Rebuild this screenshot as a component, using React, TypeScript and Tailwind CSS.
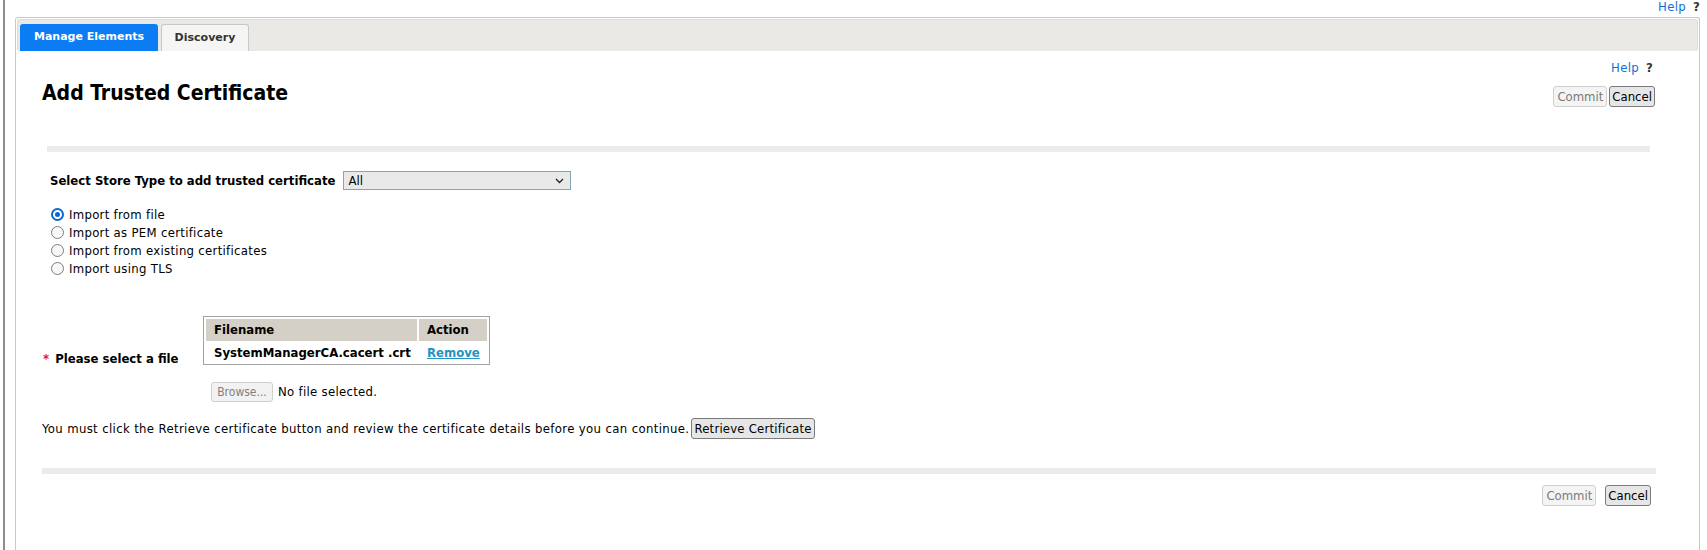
import React from 'react';

const bodyFont = "font-['DejaVu_Sans_Condensed','DejaVu_Sans',sans-serif]";

interface RadioOption {
  label: string;
  checked?: boolean;
}

const radioOptions: RadioOption[] = [
  { label: 'Import from file', checked: true },
  { label: 'Import as PEM certificate' },
  { label: 'Import from existing certificates' },
  { label: 'Import using TLS' }
];

const Radio: React.FC<RadioOption> = ({ label, checked }) => (
  <div className="flex h-[18px] items-center">
    {checked ? (
      <span className="flex h-[13px] w-[13px] items-center justify-center rounded-full border-2 border-[#0b67d0] bg-white">
        <span className="h-[5px] w-[5px] rounded-full bg-[#0b67d0]" />
      </span>
    ) : (
      <span className="h-[13px] w-[13px] rounded-full border-[1.5px] border-[#7d7d7d] bg-[#f7f7f7]" />
    )}
    <span className="ml-[5px] text-[13px] tracking-[0.3px] text-black">{label}</span>
  </div>
);

const CommitCancel: React.FC<{ gap: string }> = ({ gap }) => (
  <div className={`flex ${gap}`}>
    <button className="h-[21px] rounded-[3px] border border-[#cfcfcf] bg-[#f4f4f4] px-[3px] text-[13px] leading-[19px] text-[#7a7a7a]">
      Commit
    </button>
    <button className="h-[21px] rounded-[3px] border border-[#7a7a7a] bg-[#e6e6e6] px-[2px] text-[13px] leading-[19px] text-black">
      Cancel
    </button>
  </div>
);

const App: React.FC = () => {
  return (
    <div className={`h-[550px] w-full overflow-hidden bg-white pl-[3px] ${bodyFont}`}>
      <div className="flex h-full flex-col border-l-2 border-[#8d8d8d] pl-[10px] pr-[7px]">
        {/* top help */}
        <div className="flex h-[17px] items-start justify-end gap-[7px] text-[13px] leading-[13px] tracking-[0.3px]">
          <a className="text-[#0f6fd6]">Help</a>
          <span className="font-bold text-[#333]">?</span>
        </div>

        <div className="flex-1 rounded-t-[3px] border border-b-0 border-[#c9c9c9] p-px">
          {/* tabs */}
          <div className="flex h-[32px] items-end gap-[3px] rounded-[3px] border border-b-0 border-[#dedcd8] bg-[#ebe9e6] pl-[2px] font-['DejaVu_Sans',sans-serif] text-[11px] font-bold">
            <div className="flex h-[27px] w-[138px] items-center justify-center rounded-t-[3px] bg-[#0c7cf5] text-white">
              Manage Elements
            </div>
            <div className="flex h-[27px] w-[88px] items-center justify-center rounded-t-[3px] border border-b-0 border-[#c8c8c8] bg-[#f5f5f3] text-[#333]">
              Discovery
            </div>
          </div>

          {/* help */}
          <div className="mt-[9px] flex h-[16px] items-center justify-end gap-[7px] pr-[45px] text-[13px] tracking-[0.3px]">
            <a className="text-[#0f6fd6]">Help</a>
            <span className="font-bold text-[#333]">?</span>
          </div>

          {/* title row */}
          <div className="flex h-[70px] items-start justify-between pl-[25px] pr-[43px]">
            <h1 className="mt-[4px] text-[21px] font-bold leading-[26px] text-black">Add Trusted Certificate</h1>
            <div className="mt-[10px]">
              <CommitCancel gap="gap-[2px]" />
            </div>
          </div>

          <div className="ml-[30px] mr-[48px] h-[6px] bg-[#ebebeb]" />

          {/* store type */}
          <div className="mt-[19px] flex items-center gap-[8px] pl-[33px]">
            <span className="text-[13px] font-bold text-black">Select Store Type to add trusted certificate</span>
            <div className="flex h-[19px] w-[228px] items-center justify-between border border-[#7fa7b5] bg-[#e9e9e9] pl-[4px] pr-[6px] text-[13px] text-black">
              <span>All</span>
              <svg width="9" height="6" viewBox="0 0 9 6" fill="none" stroke="#222" strokeWidth="1.3">
                <path d="M1 1l3.5 3.5L8 1" />
              </svg>
            </div>
          </div>

          {/* radios */}
          <div className="mt-[15px] flex flex-col pl-[34px]">
            {radioOptions.map((o) => (
              <Radio key={o.label} label={o.label} checked={o.checked} />
            ))}
          </div>

          {/* file select */}
          <div className="mt-[38px] flex items-center">
            <div className="w-[186px] pl-[26px] text-[13px] font-bold text-black">
              <span className="mr-[6px] text-[#e0201b]">*</span>
              Please select a file
            </div>
            <div className="flex flex-col">
              <table className="w-[287px] border-separate border-spacing-[2px] border border-[#a3a3a3] text-left text-[13px] font-bold text-black">
                <thead>
                  <tr className="h-[22px] bg-[#d4d0c8]">
                    <th className="w-[211px] pl-[8px]">Filename</th>
                    <th className="pl-[8px]">Action</th>
                  </tr>
                </thead>
                <tbody>
                  <tr className="h-[19px]">
                    <td className="pl-[8px]">SystemManagerCA.cacert .crt</td>
                    <td className="pl-[8px]">
                      <a className="text-[#2293c3] underline">Remove</a>
                    </td>
                  </tr>
                </tbody>
              </table>
              <div className="ml-[8px] mt-[17px] flex items-center gap-[5px] text-[13px] tracking-[0.3px]">
                <button className="h-[20px] w-[62px] rounded-[3px] border border-[#cfcfcf] bg-[#f2f2f2] text-[12px] tracking-normal text-[#808080]">
                  Browse...
                </button>
                <span className="text-black">No file selected.</span>
              </div>
            </div>
          </div>

          {/* retrieve */}
          <div className="mt-[16px] flex items-center pl-[25px] text-[13px] text-black">
            <span className="tracking-[0.36px]">You must click the Retrieve certificate button and review the certificate details before you can continue.</span>
            <button className="ml-[2px] h-[21px] rounded-[3px] border border-[#7a7a7a] bg-[#e6e6e6] px-[2px] text-[13px] leading-[19px] tracking-[0.2px]">
              Retrieve Certificate
            </button>
          </div>

          <div className="ml-[25px] mr-[42px] mt-[29px] h-[6px] bg-[#ebebeb]" />

          <div className="mt-[11px] flex justify-end pr-[47px]">
            <CommitCancel gap="gap-[9px]" />
          </div>
        </div>
      </div>
    </div>
  );
};

export default App;
